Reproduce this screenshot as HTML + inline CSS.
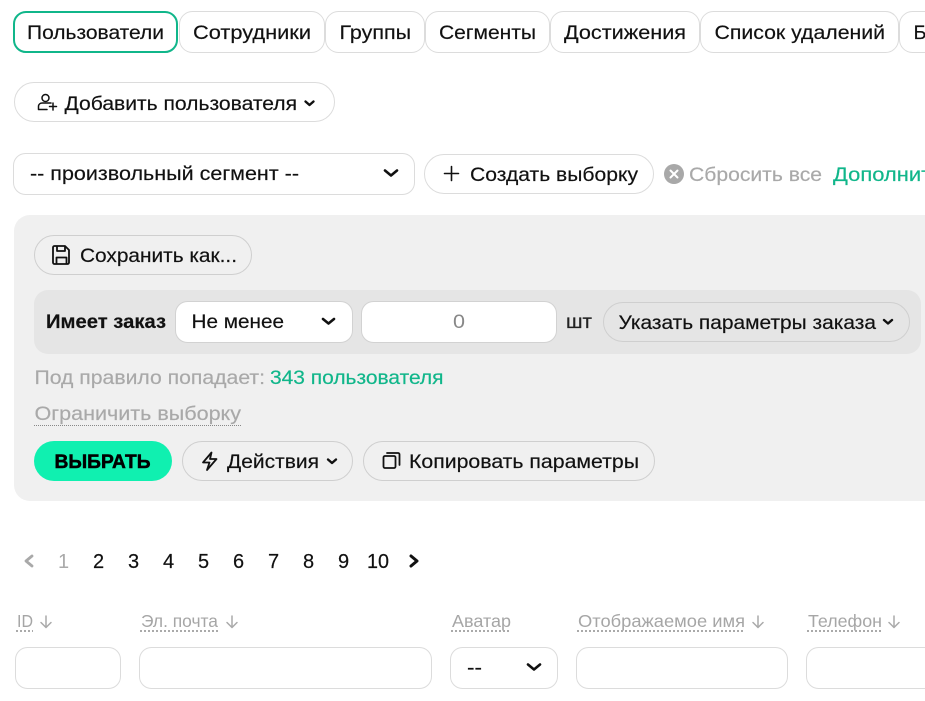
<!DOCTYPE html>
<html lang="ru"><head><meta charset="utf-8"><title>Пользователи</title>
<style>
html,body{margin:0;padding:0;background:#fff;width:925px;height:701px;overflow:hidden}
svg{display:block}
text{font-family:"Liberation Sans",sans-serif;font-size:19.8px;fill:#111;stroke:#111;stroke-width:.18px}
.g{fill:#a9a9a9;stroke:#a9a9a9}.gr{fill:#10b68a;stroke:#10b68a}
.h{font-size:17.5px;fill:#a6a6a6;stroke:none}
.b{fill:#fff;stroke:#dcdcdc;stroke-width:1}
.b2{fill:none;stroke:#cfcfcf;stroke-width:1}
.ch{fill:none;stroke:#111;stroke-width:2.400;stroke-linecap:round;stroke-linejoin:round}
.ic{fill:none;stroke:#111;stroke-width:1.800;stroke-linecap:round;stroke-linejoin:round}
.ar{fill:none;stroke:#aaa;stroke-width:1.500;stroke-linecap:round;stroke-linejoin:round}
.dot{stroke:#aaa;stroke-width:2;stroke-dasharray:2 2}
</style></head><body>
<svg width="925" height="701" viewBox="0 0 925 701" xmlns="http://www.w3.org/2000/svg">
<!-- tabs -->
<rect x="14" y="12" width="163" height="40" rx="12" fill="#fff" stroke="#10b68a" stroke-width="2"/>
<rect class="b" x="179.500" y="11.500" width="145" height="41" rx="13"/>
<rect class="b" x="325.500" y="11.500" width="99" height="41" rx="13"/>
<rect class="b" x="425.500" y="11.500" width="124" height="41" rx="13"/>
<rect class="b" x="550.500" y="11.500" width="149" height="41" rx="13"/>
<rect class="b" x="700.500" y="11.500" width="198" height="41" rx="13"/>
<rect class="b" x="899.500" y="11.500" width="60" height="41" rx="13"/>
<text x="27" y="39" textLength="137" lengthAdjust="spacingAndGlyphs">Пользователи</text>
<text x="193" y="39" textLength="118" lengthAdjust="spacingAndGlyphs">Сотрудники</text>
<text x="339.500" y="39" textLength="71.500" lengthAdjust="spacingAndGlyphs">Группы</text>
<text x="439" y="39" textLength="97" lengthAdjust="spacingAndGlyphs">Сегменты</text>
<text x="564" y="39" textLength="122" lengthAdjust="spacingAndGlyphs">Достижения</text>
<text x="714.500" y="39" textLength="170.500" lengthAdjust="spacingAndGlyphs">Список удалений</text>
<text x="913.500" y="39">Б</text>
<!-- add user -->
<rect class="b" x="14.500" y="82.500" width="320" height="39" rx="19.500"/>
<g class="ic" style="stroke-width:1.500"><circle cx="45.500" cy="98" r="3.500"/><path d="M51 103H42.500c-2.600 0-4 1.600-4 3.400V109.500H47"/><path d="M49.500 106.500h7M53 103v7"/></g>
<text x="64.500" y="110" textLength="232.500" lengthAdjust="spacingAndGlyphs">Добавить пользователя</text>
<path class="ch" d="M305.500 101.500l4 3.500 4-3.500"/>
<!-- segment select -->
<rect class="b" x="13.500" y="153.500" width="401" height="41" rx="12"/>
<text x="30" y="180" textLength="269" lengthAdjust="spacingAndGlyphs">-- произвольный сегмент --</text>
<path class="ch" d="M385 170.500l6 5 6-5" stroke-width="2.600" style="stroke-width:2.600"/>
<rect class="b" x="424.500" y="154.500" width="229" height="39" rx="19.500"/>
<path d="M444.500 173.500h14M451.500 166.500v14" fill="none" stroke="#111" stroke-width="1.600" stroke-linecap="round"/>
<text x="470" y="181" textLength="168" lengthAdjust="spacingAndGlyphs">Создать выборку</text>
<circle cx="674" cy="174" r="10" fill="#a8a8a8"/>
<path d="M670.500 170.500l7 7M677.500 170.500l-7 7" stroke="#fff" stroke-width="2" stroke-linecap="round"/>
<text class="g" x="689" y="181" textLength="133" lengthAdjust="spacingAndGlyphs">Сбросить все</text>
<text class="gr" x="833" y="181" textLength="158" lengthAdjust="spacingAndGlyphs">Дополнительно</text>
<!-- panel -->
<rect x="14" y="215" width="940" height="286" rx="16" fill="#f0f0f0"/>
<rect class="b2" x="34.500" y="235.500" width="217" height="39" rx="19.500"/>
<g class="ic"><path d="M53 247.500a1.500 1.500 0 0 1 1.500-1.500H65l4 4v12.500a1.500 1.500 0 0 1-1.500 1.500h-13a1.500 1.500 0 0 1-1.500-1.500z"/><path d="M57 246.500v4.500h8v-4.500M56.500 263.500v-6h10v6"/></g>
<text x="80" y="262" textLength="157" lengthAdjust="spacingAndGlyphs">Сохранить как...</text>
<rect x="34" y="290" width="887" height="64" rx="14" fill="#e5e5e5"/>
<text x="46" y="328" textLength="120" lengthAdjust="spacingAndGlyphs" font-weight="700">Имеет заказ</text>
<rect x="175.500" y="301.500" width="177" height="41" rx="12" fill="#fff" stroke="#d2d2d2"/>
<text x="191.500" y="328" textLength="92.500" lengthAdjust="spacingAndGlyphs">Не менее</text>
<path class="ch" d="M323 319l5.500 4.500 5.500-4.500" style="stroke-width:2.600"/>
<rect x="361.500" y="301.500" width="195" height="41" rx="12" fill="#fff" stroke="#d2d2d2"/>
<text x="453" y="328" style="fill:#888;stroke:none" textLength="12" lengthAdjust="spacingAndGlyphs">0</text>
<text x="566" y="328" textLength="26" lengthAdjust="spacingAndGlyphs" style="fill:#222">шт</text>
<rect class="b2" x="603.500" y="302.500" width="306" height="39" rx="19.500"/>
<text x="618.500" y="329" textLength="257.500" lengthAdjust="spacingAndGlyphs">Указать параметры заказа</text>
<path class="ch" d="M884 320l4 3.500 4-3.500"/>
<text class="g" x="34.500" y="384" textLength="230.500" lengthAdjust="spacingAndGlyphs">Под правило попадает:</text>
<text class="gr" x="270" y="384" textLength="173.500" lengthAdjust="spacingAndGlyphs">343 пользователя</text>
<text class="g" x="34.500" y="420" textLength="206.500" lengthAdjust="spacingAndGlyphs">Ограничить выборку</text>
<line x1="34" y1="425.500" x2="241" y2="425.500" style="stroke-width:1;stroke-dasharray:1 1;stroke:#888"/>
<rect x="34" y="441" width="138" height="40" rx="20" fill="#10f0b0"/>
<text x="54.500" y="468" textLength="96" lengthAdjust="spacingAndGlyphs" font-weight="700" style="fill:#000;stroke:#000;stroke-width:.5px;font-size:19px">ВЫБРАТЬ</text>
<rect class="b2" x="182.500" y="441.500" width="170" height="39" rx="19.500"/>
<path class="ic" d="M211.500 452.500l-8.500 10h6.500l-2.500 7.500 9.500-11h-6.500z"/>
<text x="227" y="468" textLength="92" lengthAdjust="spacingAndGlyphs">Действия</text>
<path class="ch" d="M328 459.500l4 3.500 4-3.500"/>
<rect class="b2" x="363.500" y="441.500" width="291" height="39" rx="19.500"/>
<g class="ic"><rect x="383.500" y="456" width="12" height="12" rx="1.500"/><path d="M387 453h11a1.500 1.500 0 0 1 1.500 1.500V465"/></g>
<text x="409" y="468" textLength="230" lengthAdjust="spacingAndGlyphs">Копировать параметры</text>
<!-- pagination -->
<path class="ch" d="M32 556l-6 5 6 5" style="stroke:#a9a9a9;stroke-width:2.800"/>
<text x="58" y="568" style="fill:#aaa;stroke:none;font-size:20px">1</text>
<text x="93" y="568" style="font-size:20px">2</text>
<text x="128" y="568" style="font-size:20px">3</text>
<text x="163" y="568" style="font-size:20px">4</text>
<text x="198" y="568" style="font-size:20px">5</text>
<text x="233" y="568" style="font-size:20px">6</text>
<text x="268" y="568" style="font-size:20px">7</text>
<text x="303" y="568" style="font-size:20px">8</text>
<text x="338" y="568" style="font-size:20px">9</text>
<text x="367" y="568" textLength="22" lengthAdjust="spacingAndGlyphs" style="font-size:20px">10</text>
<path class="ch" d="M411 556l6 5-6 5" style="stroke-width:3"/>
<!-- table head -->
<text class="h" x="17" y="627" textLength="16" lengthAdjust="spacingAndGlyphs">ID</text>
<line class="dot" x1="16" y1="631" x2="33" y2="631"/>
<path class="ar" d="M46 616v11M41 622.500l5 5 5-5"/>
<text class="h" x="141" y="627" textLength="77" lengthAdjust="spacingAndGlyphs">Эл. почта</text>
<line class="dot" x1="140" y1="631" x2="218" y2="631"/>
<path class="ar" d="M232 616v11M227 622.500l5 5 5-5"/>
<text class="h" x="452" y="627" textLength="59" lengthAdjust="spacingAndGlyphs">Аватар</text>
<line class="dot" x1="451" y1="631" x2="510" y2="631"/>
<text class="h" x="578" y="627" textLength="167" lengthAdjust="spacingAndGlyphs">Отображаемое имя</text>
<line class="dot" x1="577" y1="631" x2="744" y2="631"/>
<path class="ar" d="M758 616v11M753 622.500l5 5 5-5"/>
<text class="h" x="808" y="627" textLength="74" lengthAdjust="spacingAndGlyphs">Телефон</text>
<line class="dot" x1="807" y1="631" x2="881" y2="631"/>
<path class="ar" d="M894 616v11M889 622.500l5 5 5-5"/>
<!-- filters -->
<rect class="b" x="15.500" y="647.500" width="105" height="41" rx="12"/>
<rect class="b" x="139.500" y="647.500" width="292" height="41" rx="12"/>
<rect class="b" x="450.500" y="647.500" width="107" height="41" rx="12"/>
<rect class="b" x="576.500" y="647.500" width="211" height="41" rx="12"/>
<rect class="b" x="806.500" y="647.500" width="160" height="41" rx="12"/>
<text x="467" y="674" textLength="15" lengthAdjust="spacingAndGlyphs">--</text>
<path class="ch" d="M528 664.500l6 5 6-5" style="stroke-width:2.600"/>
</svg>
</body></html>
